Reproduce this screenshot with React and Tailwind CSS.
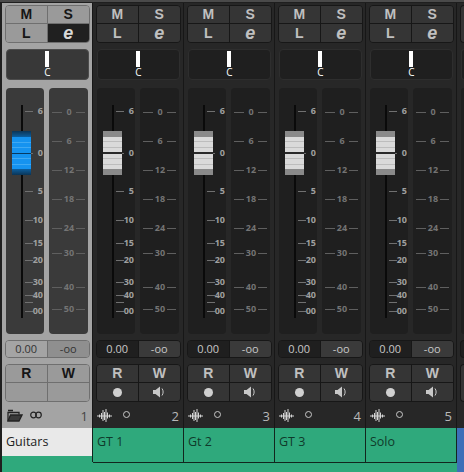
const faderTicks = [
  { y: 23, label: "6" },
  { y: 65, label: "0" },
  { y: 103, label: "5" },
  { y: 132, label: "10" },
  { y: 155, label: "15" },
  { y: 172, label: "20" },
  { y: 194, label: "30" },
  { y: 207, label: "40" },
  { y: 214, label: "" },
  { y: 223, label: "00" },
];

const meterTicks = [
  { y: 24, label: "0" },
  { y: 53, label: "6" },
  { y: 82, label: "12" },
  { y: 111, label: "18" },
  { y: 140, label: "24" },
  { y: 165, label: "30" },
  { y: 199, label: "40" },
  { y: 221, label: "50" },
];

const strips = [
  { id: 1, name: "Guitars", selected: true },
  { id: 2, name: "GT 1" },
  { id: 3, name: "Gt 2" },
  { id: 4, name: "GT 3" },
  { id: 5, name: "Solo" },
];

const Speaker = () => (
  <svg width="13" height="12" viewBox="0 0 13 12" fill="#c8c8c8">
    <path d="M0 4h2.500L7 0.500v11L2.500 8H0z" />
    <path d="M9 2.500c1.500 2 1.500 5 0 7" fill="none" stroke="#c8c8c8" strokeWidth="1" />
  </svg>
);

const Wave = () => (
  <svg width="15" height="13" viewBox="0 0 15 13" stroke="#d4d4d4" strokeWidth="1">
    <path d="M0 7h15M2.500 5.500v3M4.500 4v6M6 1v11M7.500 3v8M9 0v13M10.500 3.500v6M12.500 5.500v3" />
  </svg>
);

const Folder = () => (
  <svg width="16" height="14" viewBox="0 0 16 14" fill="none" stroke="#222" strokeWidth="1.300">
    <path d="M1 2.500h5M1 13V4.500h11v2" />
    <path d="M1 13l2.500-6h11.500l-3 6z" fill="#3a3a3a" />
  </svg>
);

const Link = () => (
  <svg width="12" height="8" viewBox="0 0 12 8" fill="none" stroke="#222" strokeWidth="1.200">
    <circle cx="3.500" cy="4" r="2.800" />
    <circle cx="8.500" cy="4" r="2.800" />
  </svg>
);

const Cap = ({ selected }) => (
  <div className="absolute left-[6px] top-[43px] w-[19px] h-[44px] flex flex-col">
    {selected ? (
      <>
        <div className="h-[6px] bg-linear-to-b from-[#0a3557] to-[#0c5f9f]" />
        <div className="flex-1 bg-[#1593f0] flex flex-col justify-evenly">
          <div className="h-px bg-[#3fa9f3]" />
          <div className="h-px bg-[#3fa9f3]" />
          <div className="h-px bg-[#063a63]" />
          <div className="h-px bg-[#3fa9f3]" />
          <div className="h-px bg-[#3fa9f3]" />
        </div>
        <div className="h-[6px] bg-linear-to-b from-[#0c5f9f] to-[#0a3557]" />
      </>
    ) : (
      <>
        <div className="h-[6px] bg-[#8a8a8a]" />
        <div className="flex-1 bg-[#dadada] flex flex-col justify-evenly">
          <div className="h-px bg-[#bdbdbd]" />
          <div className="h-px bg-[#bdbdbd]" />
          <div className="h-[2px] bg-[#2a2a2a]" />
          <div className="h-px bg-[#bdbdbd]" />
          <div className="h-px bg-[#bdbdbd]" />
        </div>
        <div className="h-[6px] bg-[#8a8a8a]" />
      </>
    )}
  </div>
);

const Strip = ({ strip }) => {
  const sel = strip.selected;
  const line = sel ? "border-[#6f6f6f]" : "border-[#171717]";
  const btn = sel ? "bg-[#9a9a9a] text-[#161616]" : "bg-[#353535] text-[#c0c0c0]";
  const well = sel ? "bg-[#3a3a3a]" : "bg-[#1f1f1f]";
  return (
    <div className="flex flex-col w-[91px] shrink-0 bg-[#2fa97c]">
      <div className={`flex flex-col h-[425px] pt-[2px] pl-[3px] pr-[2px] border-r border-[#171717] ${sel ? "bg-[#a4a4a4]" : "bg-[#272727]"}`}>
        <div className={`grid grid-cols-2 grid-rows-2 h-[38px] border rounded-[4px] overflow-hidden font-['Liberation_Sans',sans-serif] font-bold text-[14px] ${line}`}>
          <div className={`flex items-center justify-center border-r border-b ${line} ${btn}`}>M</div>
          <div className={`flex items-center justify-center border-b ${line} ${btn}`}>S</div>
          <div className={`flex items-center justify-center border-r ${line} ${btn}`}>L</div>
          <div className={`flex items-center justify-center italic text-[18px] ${sel ? "bg-[#202020] text-[#d8d8d8]" : btn}`}>e</div>
        </div>

        <div className={`relative mt-[6px] mx-px h-[31px] rounded-[4px] border ${sel ? "bg-[#383838] border-[#4c4c4c]" : "bg-[#1f1f1f] border-[#2e2e2e]"}`}>
          <div className="absolute left-[38px] top-[1px] w-[4px] h-[16px] bg-white" />
          <div className="absolute left-0 right-0 top-[15px] text-center text-[10px] leading-[14px] text-white">C</div>
        </div>

        <div className="flex gap-[5px] mt-[8px] mx-px h-[246px] text-[9px] font-bold">
          <div className={`relative w-[38px] rounded-[4px] ${well}`}>
            <div className="absolute left-[15px] top-[17px] w-[1.500px] h-[213px] bg-[#0a0a0a]" />
            {faderTicks.map((t) => (
              <div key={t.y} className="absolute left-[19px] right-[1px] h-0" style={{ top: t.y }}>
                <div className="absolute top-0 left-0 w-[8px] h-px bg-[#707070]" />
                <div className="absolute right-0 -top-[7px] leading-[14px] text-[#a0a0a0]">{t.label}</div>
              </div>
            ))}
            <Cap selected={sel} />
          </div>
          <div className={`relative w-[39px] rounded-[4px] ${well}`}>
            {meterTicks.map((t) => (
              <div key={t.y} className="absolute left-[3px] right-[3px] flex items-center justify-between h-0" style={{ top: t.y }}>
                <div className="w-[10px] h-px bg-[#5f5f5f]" />
                <div className="leading-[14px] text-[#747474]">{t.label}</div>
                <div className="w-[9px] h-px bg-[#5f5f5f]" />
              </div>
            ))}
          </div>
        </div>

        <div className={`grid grid-cols-2 mt-[6px] h-[18px] border rounded-[4px] overflow-hidden text-[11px] ${line}`}>
          <div className={`flex items-center justify-center border-r ${line} ${sel ? "bg-[#a4a4a4] text-[#333]" : "bg-[#1f1f1f] text-[#c8c8c8]"}`}>0.00</div>
          <div className={`flex items-center justify-center ${sel ? "bg-[#8f8f8f] text-[#333]" : "bg-[#3a3a3a] text-[#c8c8c8]"}`}>-oo</div>
        </div>

        <div className={`grid grid-cols-2 grid-rows-[18px_1fr] mt-[6px] h-[38px] border rounded-[4px] overflow-hidden font-['Liberation_Sans',sans-serif] font-bold text-[14px] ${line}`}>
          <div className={`flex items-center justify-center border-r border-b ${line} ${btn}`}>R</div>
          <div className={`flex items-center justify-center border-b ${line} ${btn}`}>W</div>
          <div className={`flex items-center justify-center border-r ${line} ${btn}`}>
            {!sel && <div className="w-[9px] h-[9px] rounded-full bg-[#d0d0d0]" />}
          </div>
          <div className={`flex items-center justify-center ${btn}`}>{!sel && <Speaker />}</div>
        </div>

        <div className={`flex items-center h-[26px] pr-[2px] ${sel ? "pl-[2px]" : "pl-px"}`}>
          {sel ? (
            <div className="flex items-center gap-[7px]">
              <Folder />
              <Link />
            </div>
          ) : (
            <div className="flex items-center gap-[11px]">
              <Wave />
              <div className="w-[7px] h-[7px] mb-[2px] rounded-full border-[1.500px] border-[#c8c8c8]" />
            </div>
          )}
          <span className={`ml-auto mt-[3px] text-[13px] ${sel ? "text-[#444]" : "text-[#b8b8b8]"}`}>{strip.id}</span>
        </div>
      </div>

      {sel ? (
        <div className="h-[34px] border-r border-[#12261e]">
          <div className="h-[28px] bg-[#e9e9e9] text-[#222] text-[12.500px] leading-[28px] pl-[4px]">{strip.name}</div>
        </div>
      ) : (
        <div className="h-[35px] border-r border-b border-[#12261e] text-[#0f3a2b] text-[12.500px] leading-[28px] pl-[4px]">{strip.name}</div>
      )}
    </div>
  );
};

// the next strip, only its left edge is inside the window
const NextStrip = () => (
  <div className="flex flex-col flex-1 bg-[#3d6fb8]">
    <div className="flex flex-col h-[425px] pt-[2px] pl-[3px] bg-[#272727]">
      <div className="h-[38px] bg-[#353535] border-l border-y border-[#171717] rounded-l-[4px]" />
      <div className="mt-[6px] ml-px h-[31px] bg-[#1f1f1f] border-l border-y border-[#2e2e2e] rounded-l-[4px]" />
      <div className="mt-[8px] ml-px h-[246px] bg-[#1f1f1f] rounded-l-[4px]" />
      <div className="mt-[6px] h-[18px] bg-[#1f1f1f] border-l border-y border-[#171717] rounded-l-[4px]" />
      <div className="mt-[6px] h-[38px] bg-[#353535] border-l border-y border-[#171717] rounded-l-[4px]" />
    </div>
  </div>
);

export default function App() {
  return (
    <div className="w-[464px] h-[472px] overflow-hidden font-['Open_Sans',sans-serif]">
      <div className="h-[3px] bg-[#1f1f1f] border-t-2 border-[#4a4a4a]" />
      <div className="flex h-[469px] pl-[2px] bg-[#1f1f1f]">
        {strips.map((s) => (
          <Strip key={s.id} strip={s} />
        ))}
        <NextStrip />
      </div>
    </div>
  );
}
